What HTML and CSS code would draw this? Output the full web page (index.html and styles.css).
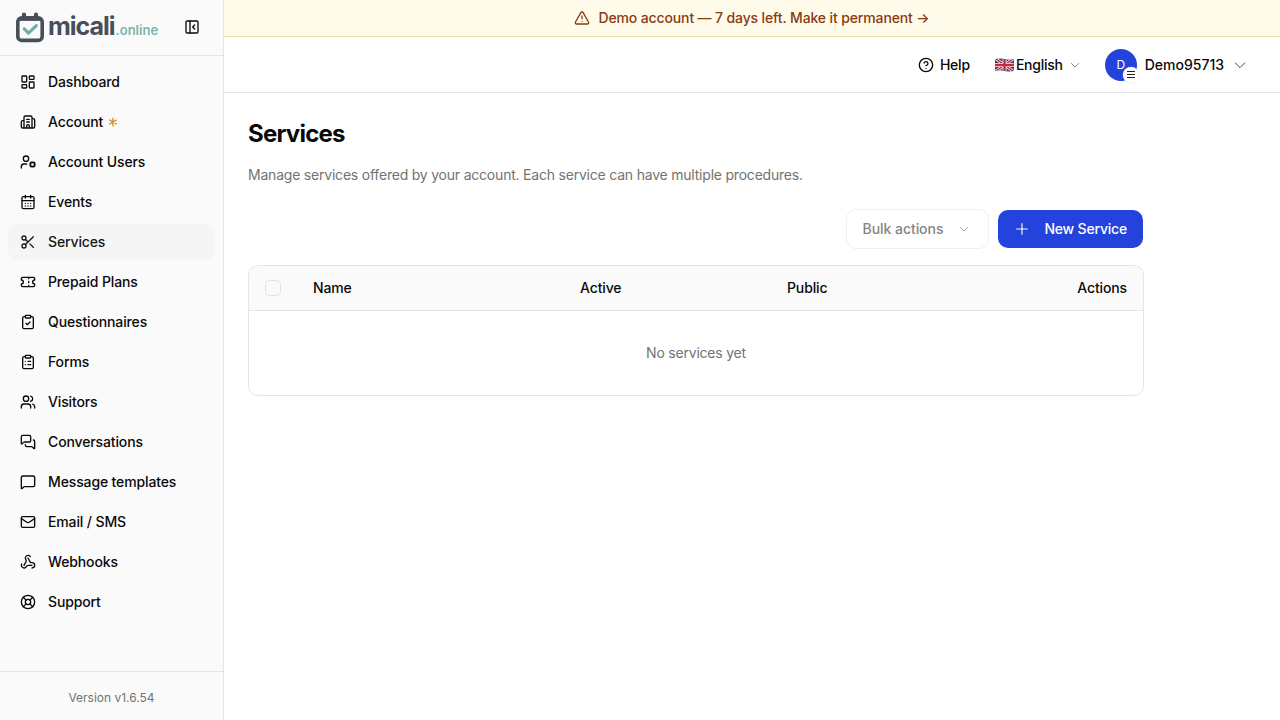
FILE: index.html
```html
<!DOCTYPE html>
<html lang="en">
<head>
<meta charset="utf-8">
<title>Services – micali.online</title>
<link rel="stylesheet" href="styles.css">
</head>
<body>
<div class="app">
  <aside class="sidebar">
    <div class="sidebar-head">
      <div class="brand">
        <svg class="brand-mark" viewBox="0 0 28 31" fill="none">
          <rect x="1.8" y="5.8" width="24.4" height="22.6" rx="4" stroke="#474f5b" stroke-width="3.6"/>
          <path d="M2 7.7h24" stroke="#474f5b" stroke-width="2.4"/>
          <path d="M8 2.7v3M20 2.7v3" stroke="#474f5b" stroke-width="4.2" stroke-linecap="round"/>
          <path d="M8.3 16.8l4.2 4.4 7.8-7.6" stroke="#6fb0a4" stroke-width="3.2" stroke-linecap="round" stroke-linejoin="round"/>
        </svg>
        <span class="brand-name">micali</span><span class="brand-tld">.online</span>
      </div>
      <svg class="icon" viewBox="0 0 24 24"><rect width="18" height="18" x="3" y="3" rx="2"/><path d="M9 3v18M16 15l-3-3 3-3"/></svg>
    </div>
    <nav class="nav">
      <a class="nav-item"><svg class="icon" viewBox="0 0 24 24"><rect width="7" height="9" x="3" y="3" rx="1"/><rect width="7" height="5" x="14" y="3" rx="1"/><rect width="7" height="9" x="14" y="12" rx="1"/><rect width="7" height="5" x="3" y="16" rx="1"/></svg>Dashboard</a>
      <a class="nav-item"><svg class="icon" viewBox="0 0 24 24"><path d="M10 12h4M10 8h4M14 21v-3a2 2 0 0 0-4 0v3M6 10H4a2 2 0 0 0-2 2v7a2 2 0 0 0 2 2h16a2 2 0 0 0 2-2V9a2 2 0 0 0-2-2h-2M6 21V5a2 2 0 0 1 2-2h8a2 2 0 0 1 2 2v16"/></svg>Account<svg class="icon star" viewBox="0 0 24 24"><path d="M12 4v16M18.9 8L5.1 16M5.1 8l13.8 8"/></svg></a>
      <a class="nav-item"><svg class="icon" viewBox="0 0 24 24"><path d="M10 15H6a4 4 0 0 0-4 4v2"/><rect x="15.5" y="12.5" width="6.500" height="6.500" rx="2" stroke-width="2.800"/><circle cx="9" cy="7" r="4"/></svg>Account Users</a>
      <a class="nav-item"><svg class="icon" viewBox="0 0 24 24"><path d="M8 2v4M16 2v4M3 10h18M8 14h.01M12 14h.01M16 14h.01M8 18h.01M12 18h.01M16 18h.01"/><rect width="18" height="18" x="3" y="4" rx="2"/></svg>Events</a>
      <a class="nav-item active"><svg class="icon" viewBox="0 0 24 24"><circle cx="6" cy="6" r="3"/><path d="M8.12 8.12L12 12M20 4L8.12 15.88"/><circle cx="6" cy="18" r="3"/><path d="M14.8 14.8L20 20"/></svg>Services</a>
      <a class="nav-item"><svg class="icon" viewBox="0 0 24 24"><path d="M2 9a3 3 0 0 1 0 6v2a2 2 0 0 0 2 2h16a2 2 0 0 0 2-2v-2a3 3 0 0 1 0-6V7a2 2 0 0 0-2-2H4a2 2 0 0 0-2 2ZM13 5v2M13 17v2M13 11v2"/></svg>Prepaid Plans</a>
      <a class="nav-item"><svg class="icon" viewBox="0 0 24 24"><rect width="8" height="4" x="8" y="2" rx="1"/><path d="M16 4h2a2 2 0 0 1 2 2v14a2 2 0 0 1-2 2H6a2 2 0 0 1-2-2V6a2 2 0 0 1 2-2h2M9 14l2 2 4-4"/></svg>Questionnaires</a>
      <a class="nav-item"><svg class="icon" viewBox="0 0 24 24"><rect width="8" height="4" x="8" y="2" rx="1"/><path d="M16 4h2a2 2 0 0 1 2 2v14a2 2 0 0 1-2 2H6a2 2 0 0 1-2-2V6a2 2 0 0 1 2-2h2M12 11h4M12 16h4M8 11h.01M8 16h.01"/></svg>Forms</a>
      <a class="nav-item"><svg class="icon" viewBox="0 0 24 24"><path d="M16 21v-2a4 4 0 0 0-4-4H6a4 4 0 0 0-4 4v2M22 21v-2a4 4 0 0 0-3-3.87M16 3.13a4 4 0 0 1 0 7.75"/><circle cx="9" cy="7" r="4"/></svg>Visitors</a>
      <a class="nav-item"><svg class="icon" viewBox="0 0 24 24"><path d="M16 10a2 2 0 0 1-2 2H6.828a2 2 0 0 0-1.414.586l-2.202 2.202A.71.71 0 0 1 2 14.286V4a2 2 0 0 1 2-2h10a2 2 0 0 1 2 2z"/><path d="M20 9a2 2 0 0 1 2 2v10.286a.71.71 0 0 1-1.212.502l-2.202-2.202A2 2 0 0 0 17.172 19H10a2 2 0 0 1-2-2v-1"/></svg>Conversations</a>
      <a class="nav-item"><svg class="icon" viewBox="0 0 24 24"><path d="M22 17a2 2 0 0 1-2 2H6.828a2 2 0 0 0-1.414.586l-2.202 2.202A.71.71 0 0 1 2 21.286V5a2 2 0 0 1 2-2h16a2 2 0 0 1 2 2z"/></svg>Message templates</a>
      <a class="nav-item"><svg class="icon" viewBox="0 0 24 24"><rect width="20" height="16" x="2" y="4" rx="2"/><path d="m22 7-8.97 5.7a1.94 1.94 0 0 1-2.06 0L2 7"/></svg>Email / SMS</a>
      <a class="nav-item"><svg class="icon" viewBox="0 0 24 24"><path d="M18 16.98h-5.99c-1.1 0-1.95.94-2.48 1.9A4 4 0 0 1 2 17c.01-.7.2-1.4.57-2"/><path d="m6 17 3.13-5.78c.53-.97.1-2.18-.5-3.1a4 4 0 1 1 6.89-4.06"/><path d="m12 6 3.13 5.73C15.66 12.7 16.9 13 18 13a4 4 0 0 1 0 8"/></svg>Webhooks</a>
      <a class="nav-item"><svg class="icon" viewBox="0 0 24 24"><circle cx="12" cy="12" r="10"/><path d="M4.93 4.93l4.24 4.24M14.83 9.17l4.24-4.24M14.83 14.83l4.24 4.24M9.17 14.83l-4.24 4.24"/><circle cx="12" cy="12" r="4"/></svg>Support</a>
    </nav>
    <div class="version">Version v1.6.54</div>
  </aside>
  <div class="content">
    <div class="banner">
      <svg class="icon" viewBox="0 0 24 24"><path d="m21.73 18-8-14a2 2 0 0 0-3.48 0l-8 14A2 2 0 0 0 4 21h16a2 2 0 0 0 1.73-3M12 9v4M12 17h.01"/></svg>
      <span>Demo account — 7 days left. Make it permanent →</span>
    </div>
    <header class="topbar">
      <a class="help"><svg class="icon" viewBox="0 0 24 24"><circle cx="12" cy="12" r="10"/><path d="M9.09 9a3 3 0 0 1 5.83 1c0 2-3 3-3 3M12 17h.01"/></svg>Help</a>
      <div class="language">
        <svg class="flag" viewBox="0 0 36 26">
          <defs><clipPath id="flag-shape"><path d="M0 2Q9-1 18 1.500T36 2V24Q27 27 18 24.500T0 24Z"/></clipPath></defs>
          <g clip-path="url(#flag-shape)">
            <rect width="36" height="26" fill="#3b3f78"/>
            <path d="M0 0l36 26M36 0L0 26" stroke="#eee" stroke-width="5.500"/>
            <path d="M0 0l36 26M36 0L0 26" stroke="#c8283c" stroke-width="2.500"/>
            <path d="M18 0v26M0 13h36" stroke="#eee" stroke-width="7.500"/>
            <path d="M18 0v26M0 13h36" stroke="#c8283c" stroke-width="4.500"/>
          </g>
        </svg>
        <span>English</span>
        <svg class="icon chevron-small" viewBox="0 0 24 24"><path d="m5 9 7 7 7-7"/></svg>
      </div>
      <div class="user">
        <div class="avatar">D<span class="avatar-menu"><svg viewBox="0 0 10 10"><path d="M1 1.500h8M1 4.500h8M1 7.500h8"/></svg></span></div>
        <span>Demo95713</span>
        <svg class="icon chevron" viewBox="0 0 24 24"><path d="m5 9 7 7 7-7"/></svg>
      </div>
    </header>
    <main class="main">
      <h1 class="title">Services</h1>
      <p class="subtitle">Manage services offered by your account. Each service can have multiple procedures.</p>
      <div class="actions">
        <button class="button bulk">Bulk actions<svg class="icon chevron" viewBox="0 0 24 24"><path d="m6 9 6 6 6-6"/></svg></button>
        <button class="button primary"><svg class="icon" viewBox="0 0 24 24"><path d="M4 12h16M12 4v16"/></svg>New Service</button>
      </div>
      <div class="table">
        <div class="table-head">
          <span class="checkbox"></span>
          <span>Name</span>
          <span>Active</span>
          <span>Public</span>
          <span class="align-right">Actions</span>
        </div>
        <div class="table-empty">No services yet</div>
      </div>
    </main>
  </div>
</div>
</body>
</html>
```
FILE: styles.css
```css
* { box-sizing: border-box; }
body {
  margin: 0;
  font-family: Inter, "Liberation Sans", sans-serif;
  font-size: 14px;
  line-height: 20px;
  color: #0a0a0a;
  background: #fff;
}
.app { display: flex; height: 720px; overflow: hidden; }
.icon {
  width: 16px;
  height: 16px;
  flex: none;
  fill: none;
  stroke: currentColor;
  stroke-width: 2;
  stroke-linecap: round;
  stroke-linejoin: round;
}
.sidebar {
  display: flex;
  flex-direction: column;
  width: 224px;
  flex: none;
  background: #fafafa;
  border-right: 1px solid #e5e5e5;
}
.sidebar-head {
  display: flex;
  align-items: center;
  justify-content: space-between;
  height: 56px;
  padding: 0 23px 1px 16px;
  border-bottom: 1px solid #e5e5e5;
}
.brand { display: flex; align-items: baseline; height: 31px; }
.brand-mark { width: 28px; height: 31px; align-self: center; margin-right: 4px; }
.brand-name {
  font-size: 25px;
  line-height: 29px;
  font-weight: 700;
  letter-spacing: -1px;
  color: #474f5b;
}
.brand-tld { margin-left: 1px; font-size: 13px; font-weight: 600; letter-spacing: 0; color: #7bb5ab; }
.nav { display: flex; flex-direction: column; gap: 4px; flex: 1; padding: 8px; }
.nav-item {
  display: flex;
  align-items: center;
  gap: 12px;
  height: 36px;
  padding: 0 12px;
  border-radius: 10px;
  font-weight: 500;
  letter-spacing: -0.13px;
}
.nav-item.active { background: #f5f5f5; color: #171717; }
.star { width: 12px; height: 12px; margin-left: -8px; stroke-width: 2.5; color: #d9840f; }
.version {
  height: 49px;
  padding: 16px 0;
  border-top: 1px solid #e5e5e5;
  font-size: 12px;
  text-align: center;
  color: #737373;
}
.content { flex: 1; min-width: 0; }
.banner {
  display: flex;
  align-items: center;
  justify-content: center;
  gap: 8px;
  height: 37px;
  background: #fffbeb;
  border-bottom: 1px solid #ece2a0;
  color: #8a3a10;
  font-weight: 500;
  letter-spacing: -0.13px;
}
.topbar {
  display: flex;
  align-items: center;
  justify-content: flex-end;
  height: 56px;
  padding-right: 32px;
  border-bottom: 1px solid #e5e5e5;
  font-weight: 500;
}
.help { display: flex; align-items: center; gap: 6px; letter-spacing: -0.2px; }
.language { display: flex; align-items: center; gap: 2px; margin-left: 25px; letter-spacing: -0.25px; }
.flag { width: 19px; height: 14px; }
.chevron-small { width: 12px; height: 12px; margin-left: 4px; opacity: .5; }
.user { display: flex; align-items: center; gap: 8px; margin-left: 24px; }
.avatar {
  position: relative;
  width: 32px;
  height: 32px;
  border-radius: 50%;
  background: #2443dc;
  color: #fff;
  font-size: 12px;
  line-height: 32px;
  text-align: center;
  font-weight: 400;
}
.avatar-menu {
  position: absolute;
  right: -2px;
  bottom: -2px;
  display: flex;
  align-items: center;
  justify-content: center;
  width: 16px;
  height: 16px;
  border-radius: 50%;
  background: #fff;
  box-shadow: 0 0 1px #ccc;
}
.avatar-menu svg { width: 10px; height: 10px; stroke: #222; stroke-width: 1; }
.chevron { stroke-width: 1.5; opacity: .75; }
.main { width: 944px; padding: 25px 24px 24px; }
.title { margin: 0; font-size: 24px; line-height: 32px; font-weight: 700; letter-spacing: -0.78px; }
.subtitle { margin: 15px 0 24px; color: #737373; letter-spacing: -0.21px; }
.actions { display: flex; align-items: center; justify-content: flex-end; gap: 9px; height: 40px; padding-right: 1px; }
.button {
  display: flex;
  align-items: center;
  padding: 0 16px;
  border: 0;
  border-radius: 10px;
  font: 500 14px/20px Inter, "Liberation Sans", sans-serif;
}
.bulk { gap: 13px; height: 40px; border: 1px solid #f0f0f0; background: #fff; color: #858585; letter-spacing: -0.05px; }
.primary { gap: 14px; height: 38px; background: #2443dc; color: #fff; letter-spacing: -0.19px; }
.primary .icon { stroke-width: 1.7; }
.table { margin-top: 16px; border: 1px solid #e5e5e5; border-radius: 10px; overflow: hidden; }
.table-head {
  display: grid;
  grid-template-columns: 48px 267px 207px 1fr 120px;
  align-items: center;
  height: 45px;
  padding: 0 16px;
  background: #fafafa;
  border-bottom: 1px solid #e5e5e5;
  font-weight: 500;
  letter-spacing: -0.13px;
}
.checkbox { width: 16px; height: 16px; border: 1px solid #e3e3e3; border-radius: 4px; }
.align-right { text-align: right; }
.table-empty { height: 84px; line-height: 84px; text-align: center; color: #737373; letter-spacing: -0.21px; }
```
